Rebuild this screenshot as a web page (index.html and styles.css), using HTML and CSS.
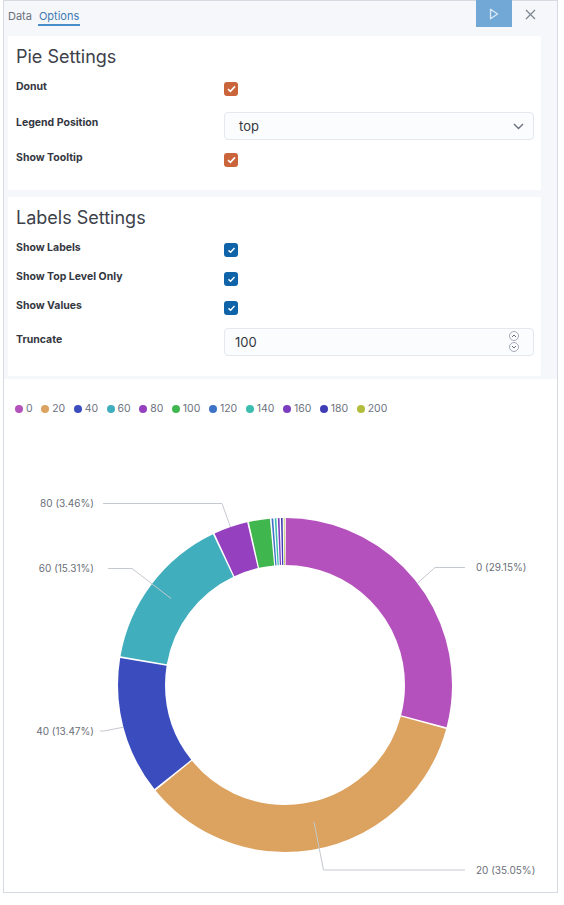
FILE: index.html
```html
<!DOCTYPE html>
<html>
<head>
<meta charset="utf-8">
<link rel="stylesheet" href="styles.css">
</head>
<body>
<div class="frame">
  <div class="editor">
    <div class="tabbar">
      <span class="tab">Data</span>
      <span class="tab active">Options</span>
      <span class="run"><svg width="10" height="12" viewBox="0 0 10 12"><path d="M1.5 1.2 L8.6 6 L1.5 10.8 Z" fill="none" stroke="#dbe9f5" stroke-width="1.3" stroke-linejoin="round"/></svg></span>
      <span class="close"><svg width="11" height="11" viewBox="0 0 11 11"><path d="M1 1 L10 10 M10 1 L1 10" stroke="#7d8490" stroke-width="1.2"/></svg></span>
    </div>
    <div class="body">
      <div class="cards">
        <section class="card card-pie">
          <h2>Pie Settings</h2>
          <div class="row row-check"><span class="lbl">Donut</span><span class="cb cb-orange"><svg width="9" height="8" viewBox="0 0 9 8"><path d="M1 4.2 L3.4 6.4 L8 1.4" fill="none" stroke="#fff" stroke-width="1.6"/></svg></span></div>
          <div class="row row-select"><span class="lbl">Legend Position</span>
            <div class="select"><span>top</span><svg width="11" height="7" viewBox="0 0 11 7"><path d="M1 1 L5.5 5.5 L10 1" fill="none" stroke="#69707d" stroke-width="1.4"/></svg></div>
          </div>
          <div class="row row-check"><span class="lbl">Show Tooltip</span><span class="cb cb-orange"><svg width="9" height="8" viewBox="0 0 9 8"><path d="M1 4.2 L3.4 6.4 L8 1.4" fill="none" stroke="#fff" stroke-width="1.6"/></svg></span></div>
        </section>
        <section class="card card-labels">
          <h2>Labels Settings</h2>
          <div class="row row-check"><span class="lbl">Show Labels</span><span class="cb cb-blue"><svg width="9" height="8" viewBox="0 0 9 8"><path d="M1.5 4.4 L3.6 6.2 L7.5 2" fill="none" stroke="#fff" stroke-width="1.4"/></svg></span></div>
          <div class="row row-check"><span class="lbl">Show Top Level Only</span><span class="cb cb-blue"><svg width="9" height="8" viewBox="0 0 9 8"><path d="M1.5 4.4 L3.6 6.2 L7.5 2" fill="none" stroke="#fff" stroke-width="1.4"/></svg></span></div>
          <div class="row row-check"><span class="lbl">Show Values</span><span class="cb cb-blue"><svg width="9" height="8" viewBox="0 0 9 8"><path d="M1.5 4.4 L3.6 6.2 L7.5 2" fill="none" stroke="#fff" stroke-width="1.4"/></svg></span></div>
          <div class="row row-num"><span class="lbl">Truncate</span>
            <div class="numinput"><span>100</span>
              <svg width="12" height="24" viewBox="0 0 12 24"><circle cx="6" cy="6" r="4.5" fill="none" stroke="#98a2b3" stroke-width="0.9"/><path d="M4 7 L6 5 L8 7" fill="none" stroke="#69707d" stroke-width="1"/><circle cx="6" cy="17" r="4.5" fill="none" stroke="#98a2b3" stroke-width="0.9"/><path d="M4 16 L6 18 L8 16" fill="none" stroke="#69707d" stroke-width="1"/></svg>
            </div>
          </div>
        </section>
      </div>
      <div class="track"></div>
    </div>
  </div>
  <div class="chart">
    <div class="legend">
      <span class="li"><i class="dot" style="background:#b551bd"></i>0</span>
      <span class="li"><i class="dot" style="background:#dca25f"></i>20</span>
      <span class="li"><i class="dot" style="background:#3b4cbf"></i>40</span>
      <span class="li"><i class="dot" style="background:#41aebd"></i>60</span>
      <span class="li"><i class="dot" style="background:#9440bf"></i>80</span>
      <span class="li"><i class="dot" style="background:#40b64f"></i>100</span>
      <span class="li"><i class="dot" style="background:#3d72c6"></i>120</span>
      <span class="li"><i class="dot" style="background:#3dbcb0"></i>140</span>
      <span class="li"><i class="dot" style="background:#7c3dbf"></i>160</span>
      <span class="li"><i class="dot" style="background:#3f3cb5"></i>180</span>
      <span class="li"><i class="dot" style="background:#b3bd3d"></i>200</span>
    </div>
    <svg class="pie" width="553" height="477" viewBox="4 415 553 477">
      <g transform="rotate(-90 285 685)">
        <circle class="seg" cx="285" cy="685" r="143.5" pathLength="100" stroke="#b551bd" stroke-dasharray="28.98 71.02" stroke-dashoffset="-0.085"/>
        <circle class="seg" cx="285" cy="685" r="143.5" pathLength="100" stroke="#dca25f" stroke-dasharray="34.88 65.12" stroke-dashoffset="-29.235"/>
        <circle class="seg" cx="285" cy="685" r="143.5" pathLength="100" stroke="#3b4cbf" stroke-dasharray="13.30 86.70" stroke-dashoffset="-64.285"/>
        <circle class="seg" cx="285" cy="685" r="143.5" pathLength="100" stroke="#41aebd" stroke-dasharray="15.14 84.86" stroke-dashoffset="-77.755"/>
        <circle class="seg" cx="285" cy="685" r="143.5" pathLength="100" stroke="#9440bf" stroke-dasharray="3.29 96.71" stroke-dashoffset="-93.065"/>
        <circle class="seg" cx="285" cy="685" r="143.5" pathLength="100" stroke="#40b64f" stroke-dasharray="2.03 97.97" stroke-dashoffset="-96.525"/>
        <circle class="seg" cx="285" cy="685" r="143.5" pathLength="100" stroke="#3d72c6" stroke-dasharray="0.16 99.84" stroke-dashoffset="-98.71"/>
        <circle class="seg" cx="285" cy="685" r="143.5" pathLength="100" stroke="#3dbcb0" stroke-dasharray="0.16 99.84" stroke-dashoffset="-99.01"/>
        <circle class="seg" cx="285" cy="685" r="143.5" pathLength="100" stroke="#7c3dbf" stroke-dasharray="0.16 99.84" stroke-dashoffset="-99.31"/>
        <circle class="seg" cx="285" cy="685" r="143.5" pathLength="100" stroke="#3f3cb5" stroke-dasharray="0.16 99.84" stroke-dashoffset="-99.61"/>
        <circle class="seg" cx="285" cy="685" r="143.5" pathLength="100" stroke="#b3bd3d" stroke-dasharray="0.08 99.92" stroke-dashoffset="-99.88"/>
      </g>
      <path class="ll" d="M417.4 583.2 L435 567.5 H465"/>
      <path class="ll" d="M314 822 L323.5 870 H465"/>
      <path class="ll" d="M123.4 727.2 L104 731 H100"/>
      <path class="ll" d="M171 598.5 L132 568.5 H108"/>
      <path class="ll" d="M230.5 527.1 L222 503.5 H103"/>
      <text class="tl" x="476" y="571">0 (29.15%)</text>
      <text class="tl" x="476" y="874">20 (35.05%)</text>
      <text class="tl end" x="94" y="735">40 (13.47%)</text>
      <text class="tl end" x="94" y="572">60 (15.31%)</text>
      <text class="tl end" x="94" y="507">80 (3.46%)</text>
    </svg>
  </div>
</div>
</body>
</html>
```
FILE: styles.css
```css
* { box-sizing: border-box; }
html, body { margin: 0; padding: 0; background: #ffffff; }
body { font-family: Inter, "Noto Sans", sans-serif; color: #343741; }

.frame {
  margin-left: 3px;
  width: 555px;
  border-left: 1px solid #d6dbe3;
  border-right: 1px solid #d6dbe3;
  border-top: 1px solid #d6dbe3;
  background: #fff;
}

.editor {
  height: 378px;
  background: #f5f7fa;
}

.tabbar {
  height: 35px;
  display: flex;
  align-items: flex-start;
  gap: 5px;
  padding: 0 9px 0 3px;
}
.tab {
  padding: 8px 1px 1px;
  font-size: 11px;
  line-height: 14px;
  color: #69707d;
  border-bottom: 2px solid transparent;
}
.tab.active {
  color: #3f7ab3;
  border-bottom-color: #4a8cc7;
}
.run {
  margin-left: auto;
  margin-top: -1px;
  width: 36px;
  height: 27px;
  background: #72a8d5;
  display: flex;
  align-items: center;
  justify-content: center;
}
.close {
  width: 36px;
  height: 27px;
  margin-left: -5px;
  display: flex;
  align-items: center;
  justify-content: center;
}

.body {
  display: flex;
}
.cards {
  width: 537px;
  padding-left: 4px;
  display: flex;
  flex-direction: column;
  gap: 7px;
}
.track { flex: 1; }

.card {
  background: #ffffff;
  border-radius: 2px;
  padding: 9px 7px 14px 8px;
}
.card-labels { padding-bottom: 20px; }
.card h2 {
  margin: 0 0 7px;
  font-size: 18px;
  line-height: 24px;
  font-weight: 400;
  color: #3d414a;
}

.row { display: flex; align-items: flex-start; }
.lbl {
  width: 208px;
  flex: none;
  font-size: 10.5px;
  line-height: 16px;
  font-weight: 700;
  color: #343741;
}
.row-check { height: 29px; }
.row-check .lbl { padding-top: 3px; }
.row-check .cb { margin-top: 6px; }
.row-select { padding: 7px 0; }
.row-select .lbl { padding-top: 3px; }
.row-num { padding-top: 4px; }
.row-num .lbl { padding-top: 4px; }

.cb {
  width: 14px;
  height: 14px;
  border-radius: 3px;
  display: flex;
  align-items: center;
  justify-content: center;
}
.cb-orange { background: #c9643b; }
.cb-blue { background: #0f63a8; }

.select, .numinput {
  width: 310px;
  height: 28px;
  border: 1px solid #e3e7ee;
  border-radius: 4px;
  background: #fbfcfd;
  display: flex;
  align-items: center;
  justify-content: space-between;
  font-size: 13px;
  color: #343741;
}
.select { padding: 0 9px 0 14px; }
.numinput { padding: 0 13px 0 10px; }

.chart {
  height: 514px;
  border-bottom: 1px solid #d6dbe3;
  background: #fff;
}
.legend {
  display: flex;
  gap: 8.5px;
  padding: 24px 0 0 11px;
  height: 36px;
  font-size: 10.5px;
  line-height: 12px;
  color: #6d7280;
}
.li { display: flex; align-items: center; gap: 3px; }
.dot {
  width: 8px;
  height: 8px;
  border-radius: 50%;
  display: block;
}
.pie { display: block; }
.seg { fill: none; stroke-width: 47; }
.ll { fill: none; stroke: #c5c9d0; stroke-width: 1; }
.tl {
  font-family: Inter, "Noto Sans", sans-serif;
  font-size: 10px;
  fill: #6a6f78;
}
.tl.end { text-anchor: end; }
```
